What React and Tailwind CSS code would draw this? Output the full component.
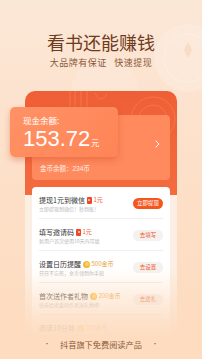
import React from "react";

const CJK = { fontFamily: '"Noto Sans CJK SC", "Noto Sans", sans-serif' };
const NUM = { fontFamily: '"Liberation Sans", "Noto Sans CJK SC", sans-serif' };

function RedIcon() {
  return (
    <span className="inline-flex w-[5px] h-[7px] rounded-[1px] bg-[#f0472b] items-center justify-center">
      <span className="w-[2px] h-[2px] rounded-full bg-[#ffd9b0]" />
    </span>
  );
}

function Coin() {
  return (
    <span className="inline-flex w-[7px] h-[7px] rounded-full bg-[#f6b632] items-center justify-center">
      <span className="w-[4px] h-[4px] rounded-full bg-[#fcd36a]" />
    </span>
  );
}

const rows = [
  { title: "提现1元到微信", reward: "1元", type: "red", sub: "立即提现到微信！秒到账！", btn: "立即提现", primary: true },
  { title: "填写邀请码", reward: "1元", type: "red", sub: "新用户首次使用10天内可填", btn: "去填写" },
  { title: "设置日历提醒", reward: "500金币", type: "coin", sub: "日日不忘签，金币领到你手软", btn: "去设置" },
  { title: "首次送作者礼物", reward: "200金币", type: "coin", sub: "快去给喜爱的作者送礼物吧", btn: "去送礼" },
  { title: "阅读10分钟", reward: "100金币", type: "coin" },
];

export default function App() {
  return (
    <div
      className="relative w-[202px] h-[359px] overflow-hidden bg-[linear-gradient(180deg,#fbe7d7_0%,#fde0c9_45%,#fddcc0_100%)]"
      style={CJK}
    >
      {/* background decoration */}
      <svg className="absolute left-0 top-0" width="202" height="120" viewBox="0 0 202 120">
        <defs>
          <linearGradient id="fadeS" x1="0" y1="0" x2="0" y2="1">
            <stop offset="0" stopColor="#fff" stopOpacity="0.5" />
            <stop offset="1" stopColor="#fff" stopOpacity="0" />
          </linearGradient>
        </defs>
        {Array.from({ length: 14 }).map((_, i) => (
          <line key={i} x1={2 + i * 3.2} y1="0" x2={2 + i * 3.2} y2="80" stroke="url(#fadeS)" strokeWidth="1" />
        ))}
        <circle cx="188" cy="58" r="34" fill="#fff" fillOpacity="0.18" />
        <circle cx="188" cy="58" r="24" fill="none" stroke="#fff" strokeOpacity="0.25" />
        <path d="M184 50 L188 42 L192 50 L188 58 Z" fill="#f5cfb0" fillOpacity="0.5" />
        <circle cx="105" cy="92" r="34" fill="#fff" fillOpacity="0.1" />
      </svg>

      <div className="relative flex flex-col items-center pt-[32px]">
        <div className="text-[18px] leading-[20px] text-[#6f3b1c]">看书还能赚钱</div>
        <div className="mt-[5px] text-[9px] leading-[12px] text-[#8b5a3a] tracking-[0.5px]">
          大品牌有保证&nbsp;&nbsp;&nbsp;快速提现
        </div>
      </div>

      {/* orange envelope card */}
      <div className="relative mx-[25px] mt-[22px] rounded-t-[10px] px-[7px] pt-[24px] bg-[linear-gradient(180deg,#ef5f37_0px,#f36b3e_104px,#fbeee2_104px)]">
        <svg className="absolute left-0 top-0" width="152" height="104" viewBox="0 0 152 104">
          <g stroke="#f77d4c" strokeWidth="1" fill="none" opacity="0.8">
            <path d="M45 0 V20 M50 0 V24 M56 0 V18 M62 0 V22" />
            <path d="M70 2 C74 10, 78 10, 82 2" />
            <circle cx="128" cy="28" r="22" />
            <circle cx="128" cy="28" r="14" />
          </g>
        </svg>

        <div className="relative flex flex-col h-[65px] rounded-[4px] bg-[#ff8a5e]">
          <div className="flex-1 flex items-center justify-end pr-[10px] pt-[8px]">
            <svg width="5" height="8" viewBox="0 0 5 8">
              <polyline points="1,1 4,4 1,7" fill="none" stroke="#fff" strokeWidth="1" strokeLinecap="round" strokeLinejoin="round" />
            </svg>
          </div>
          <div className="pl-[8px] pb-[7px] text-[6.5px] leading-[8px] text-white/85">
            金币余额：<span style={NUM}>234</span>币
          </div>
        </div>

        {/* floating cash card */}
        <div className="absolute left-[-15px] top-[16px] w-[108px] h-[50px] rounded-[5px] bg-[linear-gradient(135deg,#ff9265,#ff8457)] shadow-[0_3px_6px_rgba(200,70,30,0.35)] pl-[13px] pt-[7px]">
          <div className="text-[8.5px] leading-[12px] text-white">现金余额:</div>
          <div className="mt-[2px] flex items-baseline text-white">
            <span className="text-[22px] leading-[22px]" style={NUM}>153.72</span>
            <span className="ml-[1px] text-[8px]">元</span>
          </div>
        </div>

        <div className="mt-[7px] bg-white rounded-[4px] pb-[20px]">
          {rows.map((r) => (
            <div key={r.title} className="mx-[7px] flex items-center justify-between pt-[8px] pb-[6px] border-b border-[#f3eeea]">
              <div className="flex flex-col">
                <div className="flex items-center h-[10px]">
                  <span className="text-[7px] leading-[10px] text-[#333]">{r.title}</span>
                  <span className="ml-[2px] flex items-center">
                    {r.type === "red" ? <RedIcon /> : <Coin />}
                    <span className={`ml-[1.5px] text-[6px] leading-[8px] ${r.type === "red" ? "text-[#f15c33]" : "text-[#e8a53e]"}`}>
                      {r.reward}
                    </span>
                  </span>
                </div>
                {r.sub && <div className="text-[5px] leading-[7px] text-[#b8b8b8]">{r.sub}</div>}
              </div>
              {r.btn && (
                <div
                  className={`w-[30px] h-[11px] rounded-full flex items-center justify-center text-[5.5px] leading-[7px] ${
                    r.primary ? "bg-[#f5561f] text-white" : "bg-[#f4f1ef] text-[#f05a2e]"
                  }`}
                >
                  {r.btn}
                </div>
              )}
            </div>
          ))}
        </div>
      </div>

      {/* bottom fade */}
      <div className="absolute inset-x-0 top-[268px] bottom-0 bg-[linear-gradient(180deg,rgba(253,220,192,0)_0%,rgba(253,220,192,0.45)_30%,rgba(253,220,192,0.85)_60%,#fddcc0_78%)]" />

      <div className="absolute inset-x-0 bottom-[9px] flex items-center justify-center text-[#8a5a38]">
        <span className="text-[6px] leading-[12px]">•</span>
        <span className="mx-[10px] text-[8.2px] leading-[12px]">抖音旗下免费阅读产品</span>
        <span className="text-[6px] leading-[12px]">•</span>
      </div>
    </div>
  );
}
